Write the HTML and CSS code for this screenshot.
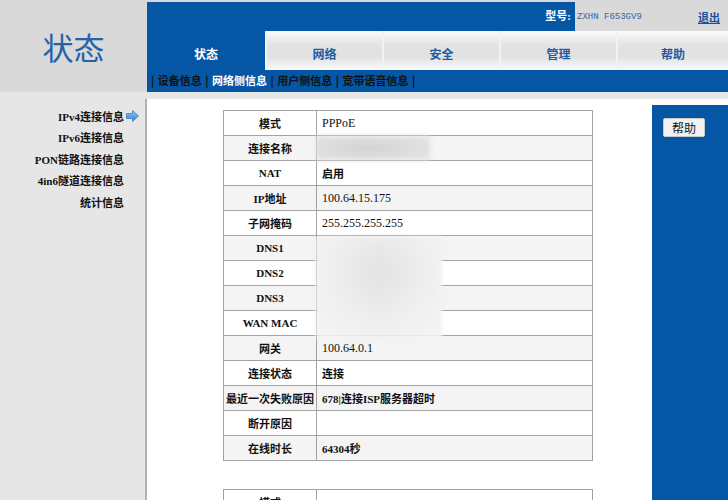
FILE: index.html
```html
<!DOCTYPE html>
<html lang="zh-cn">
<head>
  <meta charset="UTF-8" />
  <meta name="viewport" content="width=device-width, initial-scale=1.0"/>
  <title>状态 - 网络侧信息</title>
  <link rel="stylesheet" href="styles.css">
</head>
<body>
  <div class="header">
    <div class="logo">状态</div>
    <div class="nav">
      <div class="topbar">
        <div class="model-label">型号:</div>
        <div class="model">
          <span class="model-name">ZXHN F653GV9</span>
          <a class="logout" href="#">退出</a>
        </div>
      </div>
      <div class="tabs">
        <div class="tab active">状态</div>
        <div class="tab">网络</div>
        <div class="tab">安全</div>
        <div class="tab">管理</div>
        <div class="tab last">帮助</div>
      </div>
      <div class="submenu">
        | <span>设备信息</span> | <span class="current">网络侧信息</span> | <span>用户侧信息</span> | <span>宽带语音信息</span> |
      </div>
    </div>
  </div>

  <div class="page">
    <!-- 左侧菜单 -->
    <div class="sidebar">
      <div class="side-item active">
        <span>IPv4连接信息</span>
        <span class="side-icon">
          <svg width="13" height="12" viewBox="0 0 13 12">
            <defs>
              <linearGradient id="arr" x1="0" y1="0" x2="0" y2="1">
                <stop offset="0" stop-color="#9cc8f2"/>
                <stop offset="1" stop-color="#2f7fd4"/>
              </linearGradient>
            </defs>
            <path d="M0.5 3.5 H6.5 V0.5 L12.5 6 L6.5 11.5 V8.5 H0.5 Z" fill="url(#arr)" stroke="#3c7fc8" stroke-width="0.8"/>
          </svg>
        </span>
      </div>
      <div class="side-item"><span>IPv6连接信息</span><span class="side-icon"></span></div>
      <div class="side-item"><span>PON链路连接信息</span><span class="side-icon"></span></div>
      <div class="side-item"><span>4in6隧道连接信息</span><span class="side-icon"></span></div>
      <div class="side-item"><span>统计信息</span><span class="side-icon"></span></div>
    </div>

    <div class="main">
      <div class="content">
        <div class="table-wrap">
          <table class="info">
            <tr><td class="label">模式</td><td class="value">PPPoE</td></tr>
            <tr><td class="label">连接名称</td><td class="value"></td></tr>
            <tr><td class="label">NAT</td><td class="value cn">启用</td></tr>
            <tr><td class="label">IP地址</td><td class="value">100.64.15.175</td></tr>
            <tr><td class="label">子网掩码</td><td class="value">255.255.255.255</td></tr>
            <tr><td class="label">DNS1</td><td class="value"></td></tr>
            <tr><td class="label">DNS2</td><td class="value"></td></tr>
            <tr><td class="label">DNS3</td><td class="value"></td></tr>
            <tr><td class="label">WAN MAC</td><td class="value"></td></tr>
            <tr><td class="label">网关</td><td class="value">100.64.0.1</td></tr>
            <tr><td class="label">连接状态</td><td class="value cn">连接</td></tr>
            <tr><td class="label">最近一次失败原因</td><td class="value cn">678|连接ISP服务器超时</td></tr>
            <tr><td class="label">断开原因</td><td class="value"></td></tr>
            <tr><td class="label">在线时长</td><td class="value cn">64304秒</td></tr>
          </table>
          <!-- 打码区域 -->
          <div class="blur blur-name"></div>
          <div class="blur blur-dns"></div>
        </div>

        <table class="info second">
          <tr><td class="label">模式</td><td class="value"></td></tr>
          <tr><td class="label">连接名称</td><td class="value"></td></tr>
        </table>
      </div>

      <div class="helpbar">
        <button class="help-btn">帮助</button>
      </div>
    </div>
  </div>
</body>
</html>
```

FILE: styles.css
```css
body {
  margin: 0;
  background-color: #d9d9d9;
  font-family: 'Liberation Serif', 'Noto Sans CJK SC', serif;
  font-size: 11px;
  color: #111;
  height: 500px;
  overflow: hidden;
}

.header {
  display: flex;
  height: 92px;
}

.logo {
  flex: none;
  width: 147px;
  box-sizing: border-box;
  padding-top: 29px;
  text-align: center;
  font-family: 'Noto Sans CJK SC', sans-serif;
  font-size: 31px;
  line-height: 36px;
  color: #2563a8;
}

.nav {
  flex: 1;
  min-width: 0;
  display: flex;
  flex-direction: column;
}

.topbar {
  display: flex;
  height: 31px;
}

.model-label {
  flex: 1;
  margin-top: 2px;
  background-color: #0556a5;
  color: #fff;
  font-weight: bold;
  font-size: 11px;
  text-align: right;
  padding-right: 4px;
  line-height: 29px;
}

.model {
  flex: none;
  width: 153px;
  display: flex;
  justify-content: space-between;
  align-items: center;
  padding: 2px 8px 0 2px;
  box-sizing: border-box;
}

.model-name {
  font-family: 'Liberation Mono', monospace;
  font-size: 9px;
  color: #3567a6;
}

.logout {
  color: #1b4f9a;
  font-family: 'Noto Sans CJK SC', sans-serif;
  font-weight: bold;
  font-size: 11px;
  text-decoration: underline;
}

.tabs {
  display: flex;
  height: 39px;
}

.tab {
  flex: none;
  width: 117px;
  box-sizing: border-box;
  text-align: center;
  padding-top: 14px;
  font-family: 'Noto Sans CJK SC', sans-serif;
  font-weight: bold;
  font-size: 12px;
  color: #1c5ba3;
  background: linear-gradient(#fbfbfb 0%, #e3e3e3 35%, #e1e1e1 65%, #f9f9f9 100%);
  border-left: 2px solid #f2f2f2;
}

.tab.active {
  width: 118px;
  background: #0556a5;
  color: #fff;
  border-left: none;
}

.tab.last {
  flex: 1;
}

.submenu {
  height: 22px;
  background-color: #0556a5;
  padding-left: 4px;
  line-height: 21px;
  font-family: 'Noto Sans CJK SC', sans-serif;
  font-weight: bold;
  font-size: 11px;
  color: #111;
  white-space: nowrap;
  word-spacing: 1px;
}

.submenu .current {
  color: #fff;
}

.page {
  display: flex;
  height: 420px;
  background-color: #e6e6e6;
}

.sidebar {
  flex: none;
  width: 145px;
  border-right: 2px solid #b2b2b2;
  margin-top: 7px;
  padding-top: 6px;
}

.side-item {
  display: flex;
  justify-content: flex-end;
  align-items: center;
  height: 21.5px;
  font-weight: bold;
  font-size: 11px;
  white-space: nowrap;
}

.side-icon {
  width: 21px;
  display: flex;
  justify-content: flex-end;
  padding-right: 6px;
  box-sizing: border-box;
}

.main {
  flex: 1;
  display: flex;
  margin-top: 7px;
  background-color: #fff;
}

.content {
  flex: 1;
  padding: 11px 0 0 76px;
}

.table-wrap {
  position: relative;
  width: 370px;
}

.info {
  width: 370px;
  border-collapse: collapse;
  border: 1px solid #a2a2a2;
}

.info td {
  height: 24px;
  padding: 0;
  border: 1px solid #a2a2a2;
}

.info tr:nth-child(even) td {
  background-color: #f4f4f4;
}

.label {
  width: 92px;
  text-align: center;
  font-weight: bold;
  white-space: nowrap;
}

.value {
  padding-left: 5px !important;
  font-size: 12px;
}

.value.cn {
  font-size: 11px;
  font-weight: bold;
}

.second {
  margin-top: 28px;
}

.blur {
  position: absolute;
  left: 93px;
  filter: blur(2px);
}

.blur-name {
  top: 26px;
  width: 114px;
  height: 24px;
  background: radial-gradient(ellipse at 45% 50%, #d2d2d2 0%, #dcdcdc 45%, #e6e6e6 100%);
}

.blur-dns {
  top: 127px;
  width: 126px;
  height: 101px;
  background: radial-gradient(ellipse at 50% 35%, #e3e3e3 0%, #efefef 55%, #f5f5f5 100%);
}

.helpbar {
  flex: none;
  width: 76px;
  margin-top: 6px;
  background-color: #0556a5;
  padding: 13px 0 0 11px;
  box-sizing: border-box;
}

.help-btn {
  width: 42px;
  height: 19px;
  padding: 0;
  background-color: #f2f2f2;
  border: 1px solid #c8c8c8;
  border-radius: 2px;
  font-family: 'Noto Sans CJK SC', sans-serif;
  font-size: 12px;
  color: #111;
  line-height: 17px;
}
```
